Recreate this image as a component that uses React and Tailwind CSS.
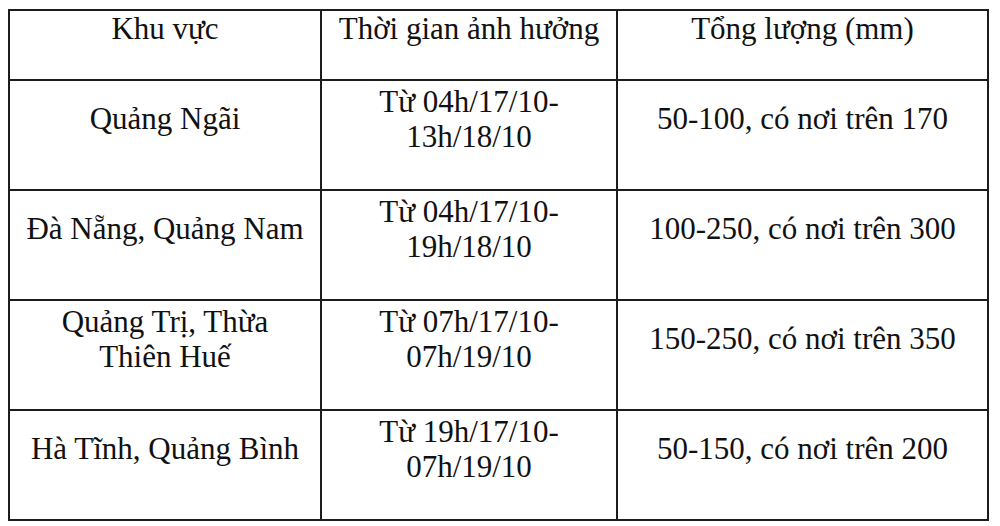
import { Fragment } from "react";

export default function App() {
  const rows = [
    { a: ["Quảng Ngãi"], b: ["Từ 04h/17/10-", "13h/18/10"], c: ["50-100, có nơi trên 170"] },
    { a: ["Đà Nẵng, Quảng Nam"], b: ["Từ 04h/17/10-", "19h/18/10"], c: ["100-250, có nơi trên 300"] },
    { a: ["Quảng Trị, Thừa", "Thiên Huế"], b: ["Từ 07h/17/10-", "07h/19/10"], c: ["150-250, có nơi trên 350"] },
    { a: ["Hà Tĩnh, Quảng Bình"], b: ["Từ 19h/17/10-", "07h/19/10"], c: ["50-150, có nơi trên 200"] },
  ];
  const Cell = ({ lines, h }) => (
    <div className={`bg-white flex flex-col justify-center items-center pt-[2px] pb-[35px] ${h}`}>
      {lines.map((l, i) => (
        <div key={i} className="leading-[35px] whitespace-nowrap">{l}</div>
      ))}
    </div>
  );
  return (
    <div className="w-[1000px] h-[526px] bg-white pt-[9px] pl-[8px]" style={{ fontFamily: '"Liberation Serif", "Times New Roman", serif' }}>
      <div className="w-[981px] bg-[#1c1c1c] p-[2px] grid grid-cols-[310px_294px_369px] gap-[2px] text-[31px] text-[#111]">
        <Cell lines={["Khu vực"]} h="h-[68px]" />
        <Cell lines={["Thời gian ảnh hưởng"]} h="h-[68px]" />
        <Cell lines={["Tổng lượng (mm)"]} h="h-[68px]" />
        {rows.map((r, i) => (
          <Fragment key={i}>
            <Cell lines={r.a} h="h-[108px]" />
            <Cell lines={r.b} h="h-[108px]" />
            <Cell lines={r.c} h="h-[108px]" />
          </Fragment>
        ))}
      </div>
    </div>
  );
}
